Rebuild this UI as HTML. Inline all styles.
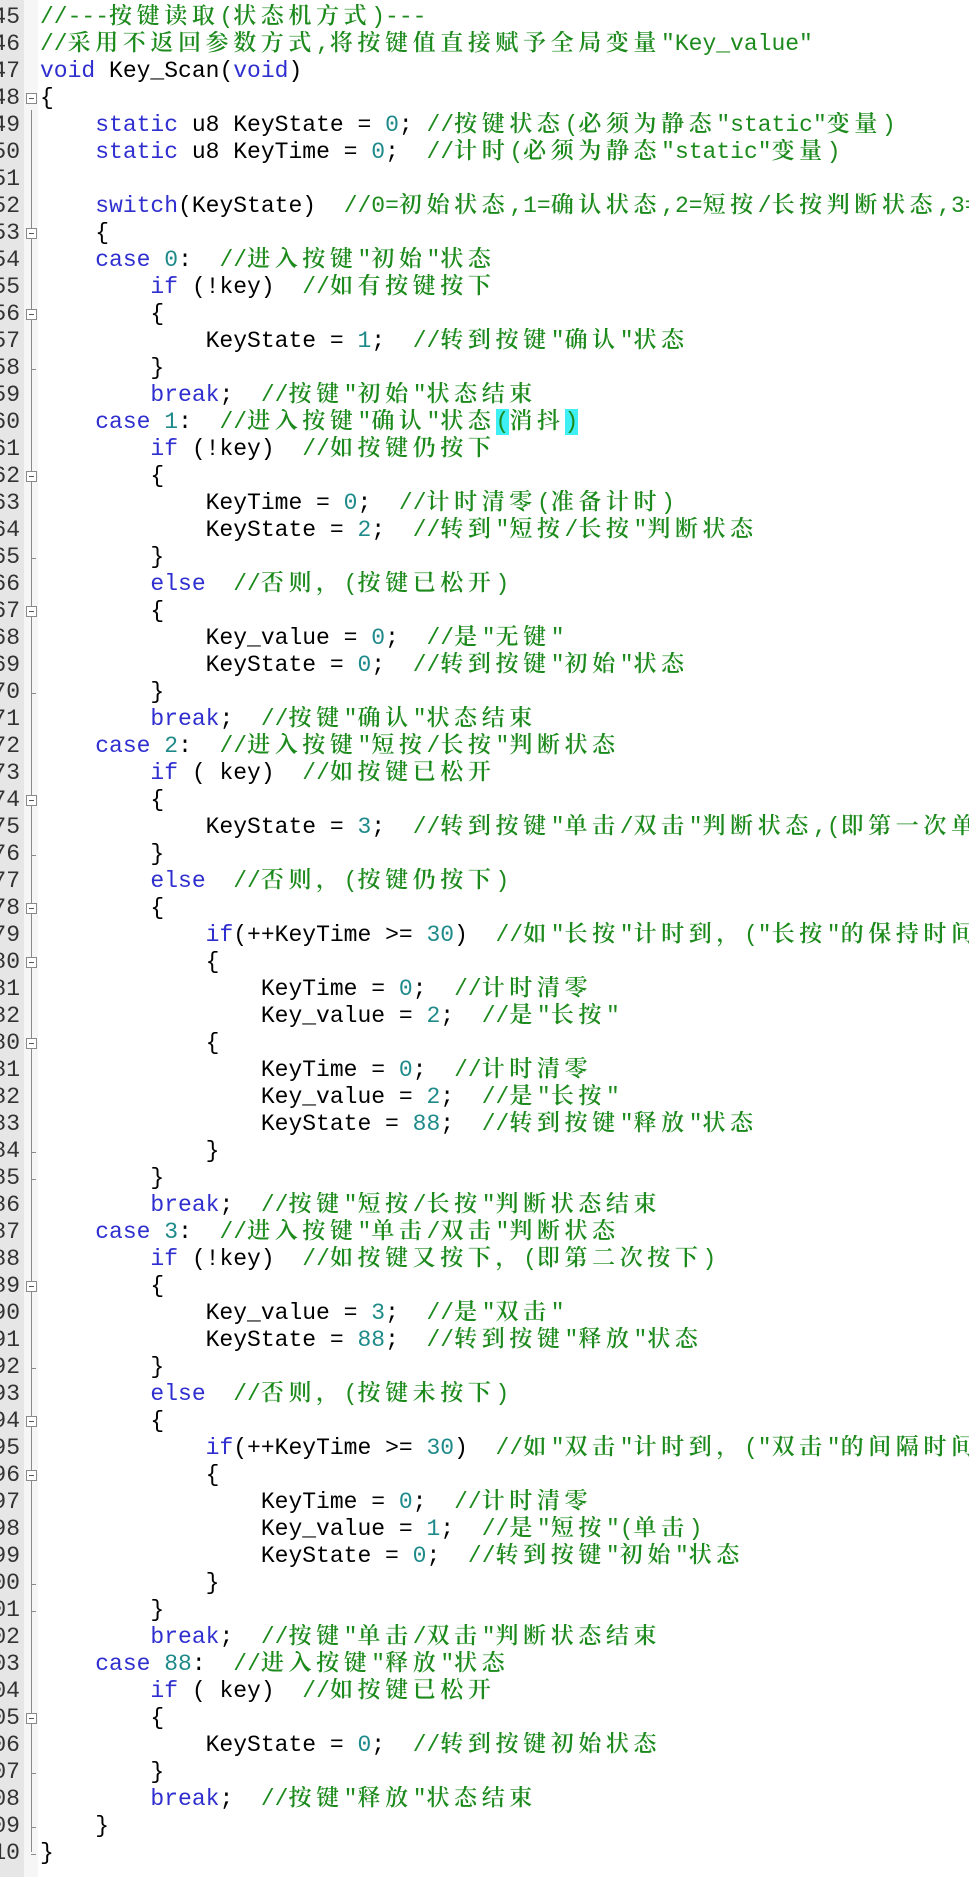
<!DOCTYPE html>
<html><head><meta charset="utf-8">
<style>
html,body{margin:0;padding:0;background:#fff;}
body{width:969px;height:1877px;overflow:hidden;position:relative;font-family:"Liberation Mono","Noto Serif CJK SC",monospace;font-size:23px;}
#gut{position:absolute;left:0;top:0;width:24px;height:1877px;background:#e6e6e6;overflow:hidden;}
#fold{position:absolute;left:24px;top:0;width:14px;height:1877px;background:#f6f6f6;}
#vl{position:absolute;left:31px;top:110px;width:1px;height:1742px;background:#8a8a8a;}
.bx{position:absolute;left:26px;width:9px;height:9px;border:1px solid #8a8a8a;background:#fff;}
.bx:after{content:"";position:absolute;left:2px;top:4px;width:5px;height:1px;background:#555;}
.tk{position:absolute;left:31px;width:5px;height:1px;background:#8a8a8a;}
.ln{position:absolute;right:4px;width:60px;text-align:right;color:#333;height:27px;line-height:27px;}
#code{position:absolute;left:40px;top:4px;width:929px;overflow:hidden;}
.l{height:27px;line-height:27px;white-space:pre;color:#000;overflow:hidden;}
.k{color:#2f2fd0;}
.n{color:#1f8a8a;}
.c{color:#1c8a1c;}
.z{font-family:"Noto Serif CJK SC","Noto Sans CJK SC",serif;letter-spacing:4.6px;line-height:1px;font-weight:600;}
.h{background:#3ef0f4;}
</style></head><body>
<div id="gut"></div>
<div id="fold"></div>
<div id="vl"></div>
<div id="code">
<div class="l"><span class="c">//---按键读取(状态机方式)---</span></div>
<div class="l"><span class="c">//采用不返回参数方式,将按键值直接赋予全局变量"Key_value"</span></div>
<div class="l"><span class="k">void</span> Key_Scan(<span class="k">void</span>)</div>
<div class="l">{</div>
<div class="l">    <span class="k">static</span> u8 KeyState = <span class="n">0</span>; <span class="c">//按键状态(必须为静态"static"变量)</span></div>
<div class="l">    <span class="k">static</span> u8 KeyTime = <span class="n">0</span>;  <span class="c">//计时(必须为静态"static"变量)</span></div>
<div class="l"> </div>
<div class="l">    <span class="k">switch</span>(KeyState)  <span class="c">//0=初始状态,1=确认状态,2=短按/长按判断状态,3=单击/双击判断状态</span></div>
<div class="l">    {</div>
<div class="l">    <span class="k">case</span> <span class="n">0</span>:  <span class="c">//进入按键"初始"状态</span></div>
<div class="l">        <span class="k">if</span> (!key)  <span class="c">//如有按键按下</span></div>
<div class="l">        {</div>
<div class="l">            KeyState = <span class="n">1</span>;  <span class="c">//转到按键"确认"状态</span></div>
<div class="l">        }</div>
<div class="l">        <span class="k">break</span>;  <span class="c">//按键"初始"状态结束</span></div>
<div class="l">    <span class="k">case</span> <span class="n">1</span>:  <span class="c">//进入按键"确认"状态<span class="h">(</span>消抖<span class="h">)</span></span></div>
<div class="l">        <span class="k">if</span> (!key)  <span class="c">//如按键仍按下</span></div>
<div class="l">        {</div>
<div class="l">            KeyTime = <span class="n">0</span>;  <span class="c">//计时清零(准备计时)</span></div>
<div class="l">            KeyState = <span class="n">2</span>;  <span class="c">//转到"短按/长按"判断状态</span></div>
<div class="l">        }</div>
<div class="l">        <span class="k">else</span>  <span class="c">//否则，(按键已松开)</span></div>
<div class="l">        {</div>
<div class="l">            Key_value = <span class="n">0</span>;  <span class="c">//是"无键"</span></div>
<div class="l">            KeyState = <span class="n">0</span>;  <span class="c">//转到按键"初始"状态</span></div>
<div class="l">        }</div>
<div class="l">        <span class="k">break</span>;  <span class="c">//按键"确认"状态结束</span></div>
<div class="l">    <span class="k">case</span> <span class="n">2</span>:  <span class="c">//进入按键"短按/长按"判断状态</span></div>
<div class="l">        <span class="k">if</span> ( key)  <span class="c">//如按键已松开</span></div>
<div class="l">        {</div>
<div class="l">            KeyState = <span class="n">3</span>;  <span class="c">//转到按键"单击/双击"判断状态,(即第一次单击)</span></div>
<div class="l">        }</div>
<div class="l">        <span class="k">else</span>  <span class="c">//否则，(按键仍按下)</span></div>
<div class="l">        {</div>
<div class="l">            <span class="k">if</span>(++KeyTime &gt;= <span class="n">30</span>)  <span class="c">//如"长按"计时到，("长按"的保持时间)</span></div>
<div class="l">            {</div>
<div class="l">                KeyTime = <span class="n">0</span>;  <span class="c">//计时清零</span></div>
<div class="l">                Key_value = <span class="n">2</span>;  <span class="c">//是"长按"</span></div>
<div class="l">            {</div>
<div class="l">                KeyTime = <span class="n">0</span>;  <span class="c">//计时清零</span></div>
<div class="l">                Key_value = <span class="n">2</span>;  <span class="c">//是"长按"</span></div>
<div class="l">                KeyState = <span class="n">88</span>;  <span class="c">//转到按键"释放"状态</span></div>
<div class="l">            }</div>
<div class="l">        }</div>
<div class="l">        <span class="k">break</span>;  <span class="c">//按键"短按/长按"判断状态结束</span></div>
<div class="l">    <span class="k">case</span> <span class="n">3</span>:  <span class="c">//进入按键"单击/双击"判断状态</span></div>
<div class="l">        <span class="k">if</span> (!key)  <span class="c">//如按键又按下，(即第二次按下)</span></div>
<div class="l">        {</div>
<div class="l">            Key_value = <span class="n">3</span>;  <span class="c">//是"双击"</span></div>
<div class="l">            KeyState = <span class="n">88</span>;  <span class="c">//转到按键"释放"状态</span></div>
<div class="l">        }</div>
<div class="l">        <span class="k">else</span>  <span class="c">//否则，(按键未按下)</span></div>
<div class="l">        {</div>
<div class="l">            <span class="k">if</span>(++KeyTime &gt;= <span class="n">30</span>)  <span class="c">//如"双击"计时到，("双击"的间隔时间)</span></div>
<div class="l">            {</div>
<div class="l">                KeyTime = <span class="n">0</span>;  <span class="c">//计时清零</span></div>
<div class="l">                Key_value = <span class="n">1</span>;  <span class="c">//是"短按"(单击)</span></div>
<div class="l">                KeyState = <span class="n">0</span>;  <span class="c">//转到按键"初始"状态</span></div>
<div class="l">            }</div>
<div class="l">        }</div>
<div class="l">        <span class="k">break</span>;  <span class="c">//按键"单击/双击"判断状态结束</span></div>
<div class="l">    <span class="k">case</span> <span class="n">88</span>:  <span class="c">//进入按键"释放"状态</span></div>
<div class="l">        <span class="k">if</span> ( key)  <span class="c">//如按键已松开</span></div>
<div class="l">        {</div>
<div class="l">            KeyState = <span class="n">0</span>;  <span class="c">//转到按键初始状态</span></div>
<div class="l">        }</div>
<div class="l">        <span class="k">break</span>;  <span class="c">//按键"释放"状态结束</span></div>
<div class="l">    }</div>
<div class="l">}</div>
</div>
<script>
(function(){
  var nums=[45,46,47,48,49,50,51,52,53,54,55,56,57,58,59,60,61,62,63,64,65,66,67,68,69,70,71,72,73,74,75,76,77,78,79,80,81,82,80,81,82,83,84,85,86,87,88,89,90,91,92,93,94,95,96,97,98,99,100,101,102,103,104,105,106,107,108,109,110];
  var gut=document.getElementById('gut');
  for(var i=0;i<nums.length;i++){
    var d=document.createElement('div');d.className='ln';d.style.top=(4+i*27)+'px';
    d.textContent=nums[i];gut.appendChild(d);
  }
  var boxes=[48,53,56,62,67,74,78,80,89,94,96,105];
  var rowsB=[];
  for(var i=0;i<nums.length;i++){ if(boxes.indexOf(nums[i])>=0) rowsB.push(i); }
  var ticks=[58,65,70,76,84,85,92,100,101,107,109,110];
  var rowsT=[];
  for(var i=0;i<nums.length;i++){ if(ticks.indexOf(nums[i])>=0) rowsT.push(i); }
  rowsB.forEach(function(r){var b=document.createElement('div');b.className='bx';b.style.top=(4+r*27+8)+'px';document.body.appendChild(b);});
  rowsT.forEach(function(r){var b=document.createElement('div');b.className='tk';b.style.top=(4+r*27+14)+'px';document.body.appendChild(b);});
  var re=/[\u3000-\u9fff\uff00-\uffef]+/g;
  var walker=document.createTreeWalker(document.getElementById('code'),NodeFilter.SHOW_TEXT,null,false);
  var nodes=[];while(walker.nextNode())nodes.push(walker.currentNode);
  nodes.forEach(function(t){
    var s=t.nodeValue; if(!re.test(s)) return; re.lastIndex=0;
    var f=document.createDocumentFragment(),last=0,m;
    while((m=re.exec(s))){
      if(m.index>last)f.appendChild(document.createTextNode(s.slice(last,m.index)));
      var sp=document.createElement('span');sp.className='z';sp.textContent=m[0];f.appendChild(sp);
      last=m.index+m[0].length;
    }
    if(last<s.length)f.appendChild(document.createTextNode(s.slice(last)));
    t.parentNode.replaceChild(f,t);
  });
})();
</script>
</body></html>
